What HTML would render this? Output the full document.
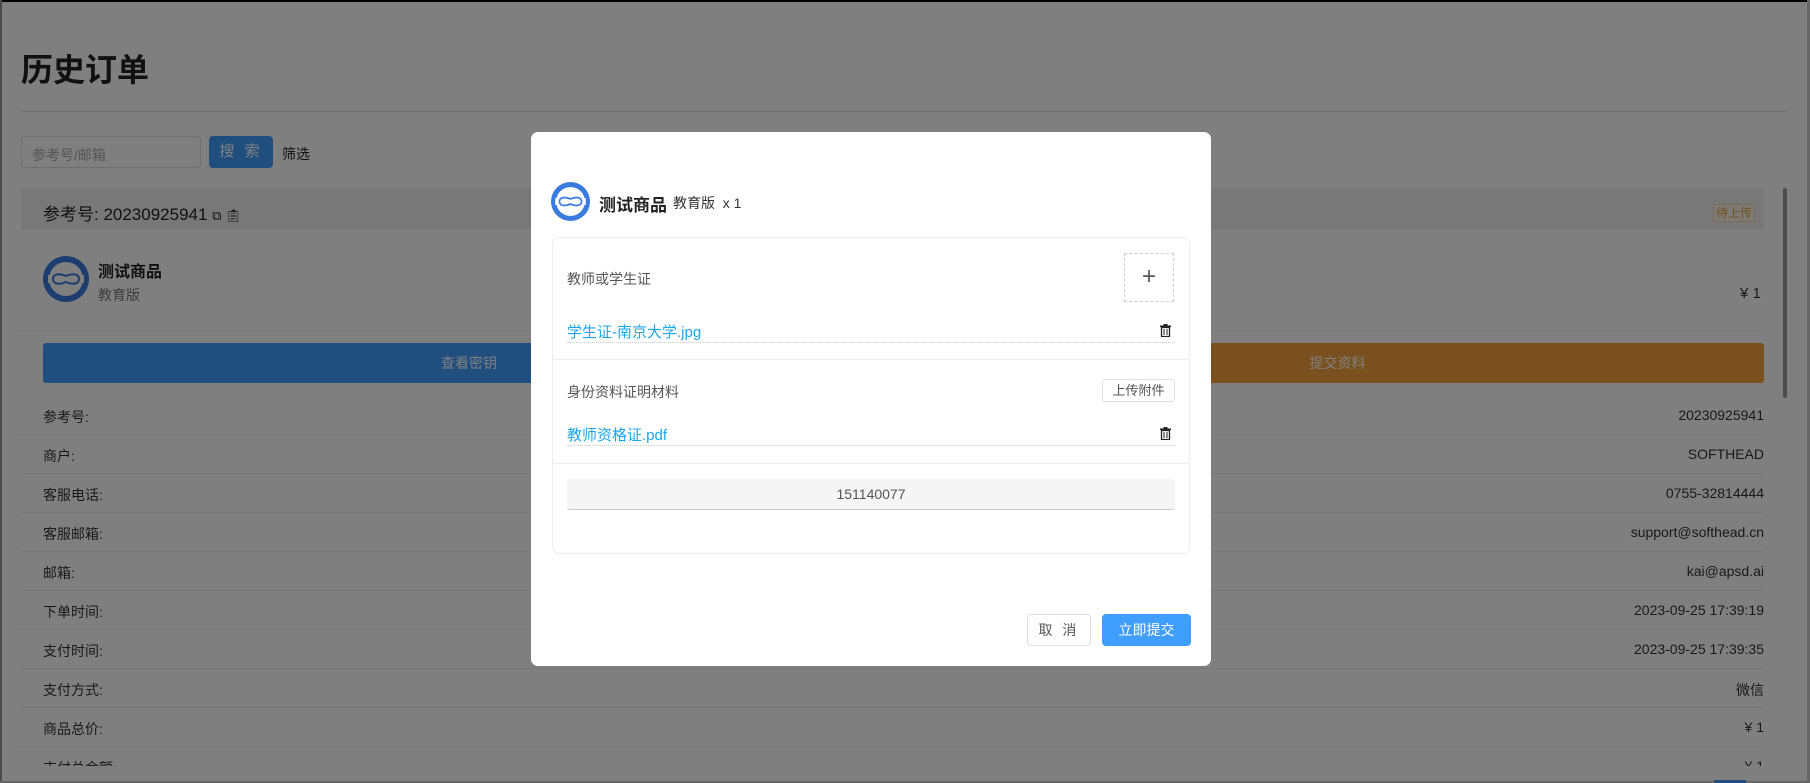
<!DOCTYPE html>
<html><head><meta charset="utf-8"><style>
*{box-sizing:border-box;margin:0;padding:0}
body{width:1810px;height:783px;overflow:hidden;background:#fff;font-family:"Liberation Sans","Noto Sans CJK SC",sans-serif;position:relative;color:#333}
.abs{position:absolute}
.row{position:absolute;left:21px;width:1743px;height:39px;border-bottom:1px solid #ebeef5;font-size:14px;color:#333}
.row span{position:absolute;top:11px}
.row .l{left:22px}.row .r{right:0}
.ov{position:absolute;left:0;top:0;width:1810px;height:783px;background:rgba(0,0,0,.5)}
.modal{position:absolute;left:531px;top:132px;width:680px;height:534px;background:#fff;border-radius:7px}
.tr{position:absolute;right:4px;top:3px}
</style></head><body>
<div class="abs" style="left:0;top:0;width:1810px;height:2px;background:#000"></div>
<div class="abs" style="left:0;top:0;width:2px;height:783px;background:#999"></div>
<div class="abs" style="right:0;top:0;width:3px;height:783px;background:#ccc"></div>
<div class="abs" style="left:0;bottom:0;width:1810px;height:2px;background:#ccc"></div>
<div class="abs" style="left:21px;top:45px;font-size:32px;font-weight:bold;color:#222">历史订单</div>
<div class="abs" style="left:21px;top:111px;width:1766px;height:1px;background:#ddd"></div>
<div class="abs" style="left:21px;top:136px;width:180px;height:32px;border:1px solid #dcdfe6;border-radius:4px;font-size:14px;color:#aaa;padding:8px 10px">参考号/邮箱</div>
<div class="abs" style="left:209px;top:136px;width:64px;height:32px;background:#409eff;border-radius:4px;color:#fff;font-size:15px;text-align:center;line-height:32px;letter-spacing:3px">搜 索</div>
<div class="abs" style="left:282px;top:144px;font-size:14px;color:#222">筛选</div>
<div class="abs" style="left:21px;top:188px;width:1743px;height:42px;background:#f0f0f0"></div>
<div class="abs" style="left:43px;top:200px;font-size:17px;color:#222">参考号: 20230925941 <span style="font-size:13px">⧉ 📋︎</span></div>
<div class="abs" style="left:1713px;top:204px;width:42px;height:18px;border:1px solid #f5dab1;background:#fdf6ec;color:#e6a23c;font-size:12px;text-align:center;line-height:16px">待上传</div>
<div class="abs" style="left:1783px;top:188px;width:4px;height:210px;background:#999;border-radius:2px"></div>
<svg class="abs" style="left:43px;top:256px" width="46" height="46" viewBox="0 0 46 46"><circle cx="23" cy="23" r="23" fill="#3a7be0"/><circle cx="23" cy="23" r="17" fill="#fff"/><path d="M10 23c0-5 6-6 13-3 7-3 13-2 13 3s-6 6-13 3c-7 3-13 2-13-3z" fill="none" stroke="#3a7be0" stroke-width="2"/><rect x="5" y="19" width="3" height="8" fill="#fff"/><rect x="38" y="19" width="3" height="8" fill="#fff"/></svg>
<div class="abs" style="left:98px;top:258px;font-size:16px;font-weight:bold;color:#222">测试商品</div>
<div class="abs" style="left:98px;top:285px;font-size:14px;color:#777">教育版</div>
<div class="abs" style="left:1740px;top:285px;font-size:15px;color:#333">¥ 1</div>
<div class="abs" style="left:21px;top:330px;width:1743px;height:1px;background:#ebeef5"></div>
<div class="abs" style="left:43px;top:343px;width:852px;height:40px;background:#409eff;border-radius:3px;color:#fff;font-size:14px;text-align:center;line-height:40px">查看密钥</div>
<div class="abs" style="left:911px;top:343px;width:853px;height:40px;background:#f5a33c;border-radius:3px;color:#fff;font-size:14px;text-align:center;line-height:40px">提交资料</div>
<div class="row" style="top:396px"><span class="l">参考号:</span><span class="r">20230925941</span></div>
<div class="row" style="top:435px"><span class="l">商户:</span><span class="r">SOFTHEAD</span></div>
<div class="row" style="top:474px"><span class="l">客服电话:</span><span class="r">0755-32814444</span></div>
<div class="row" style="top:513px"><span class="l">客服邮箱:</span><span class="r">support@softhead.cn</span></div>
<div class="row" style="top:552px"><span class="l">邮箱:</span><span class="r">kai@apsd.ai</span></div>
<div class="row" style="top:591px"><span class="l">下单时间:</span><span class="r">2023-09-25 17:39:19</span></div>
<div class="row" style="top:630px"><span class="l">支付时间:</span><span class="r">2023-09-25 17:39:35</span></div>
<div class="row" style="top:669px"><span class="l">支付方式:</span><span class="r">微信</span></div>
<div class="row" style="top:708px"><span class="l">商品总价:</span><span class="r">¥ 1</span></div>
<div class="row" style="top:747px;height:19px;overflow:hidden;border:0"><span class="l">支付总金额:</span><span class="r">¥ 1</span></div>
<div class="abs" style="left:1714px;top:780px;width:32px;height:3px;background:#409eff"></div>
<div class="ov"></div>
<div class="modal">
<svg class="abs" style="left:20px;top:50px" width="39" height="39" viewBox="0 0 46 46"><circle cx="23" cy="23" r="23" fill="#3a7be0"/><circle cx="23" cy="23" r="17" fill="#fff"/><path d="M10 23c0-5 6-6 13-3 7-3 13-2 13 3s-6 6-13 3c-7 3-13 2-13-3z" fill="none" stroke="#3a7be0" stroke-width="2"/><rect x="5" y="19" width="3" height="8" fill="#fff"/><rect x="38" y="19" width="3" height="8" fill="#fff"/></svg>
<div class="abs" style="left:68px;top:59px;font-size:17px;font-weight:bold;color:#222">测试商品</div>
<div class="abs" style="left:142px;top:61px;font-size:14px;color:#333">教育版 &nbsp;x 1</div>
<div class="abs" style="left:21px;top:105px;width:638px;height:317px;border:1px solid #ebeef5;border-radius:7px"></div>
<div class="abs" style="left:36px;top:137px;font-size:14px;color:#555">教师或学生证</div>
<div class="abs" style="left:593px;top:121px;width:50px;height:49px;border:1px dashed #ccc;text-align:center;line-height:46px;font-size:24px;color:#555">+</div>
<div class="abs" style="left:36px;top:189px;width:608px;height:22px;border-bottom:1px dotted #ccc;font-size:15px;color:#1aa7ee">学生证-南京大学.jpg<svg class="tr" width="11" height="13" viewBox="0 0 11 13"><rect x="0" y="1.5" width="11" height="1.5" fill="#222"/><rect x="3.5" y="0" width="4" height="1.5" fill="#222"/><path d="M1.5 3.5h8v9h-8z" fill="none" stroke="#222" stroke-width="1.3"/><path d="M4 5v6M7 5v6" stroke="#222"/></svg></div>
<div class="abs" style="left:22px;top:227px;width:636px;height:1px;background:#ebeef5"></div>
<div class="abs" style="left:36px;top:250px;font-size:14px;color:#555">身份资料证明材料</div>
<div class="abs" style="left:571px;top:247px;width:73px;height:23px;border:1px solid #dcdfe6;border-radius:3px;font-size:13px;color:#555;text-align:center;line-height:21px">上传附件</div>
<div class="abs" style="left:36px;top:292px;width:608px;height:22px;border-bottom:1px dotted #ccc;font-size:15px;color:#1aa7ee">教师资格证.pdf<svg class="tr" width="11" height="13" viewBox="0 0 11 13"><rect x="0" y="1.5" width="11" height="1.5" fill="#222"/><rect x="3.5" y="0" width="4" height="1.5" fill="#222"/><path d="M1.5 3.5h8v9h-8z" fill="none" stroke="#222" stroke-width="1.3"/><path d="M4 5v6M7 5v6" stroke="#222"/></svg></div>
<div class="abs" style="left:22px;top:331px;width:636px;height:1px;background:#ebeef5"></div>
<div class="abs" style="left:36px;top:347px;width:608px;height:31px;background:#f5f5f5;border-bottom:1px solid #ccc;border-radius:3px;text-align:center;line-height:30px;font-size:14px;color:#555">151140077</div>
<div class="abs" style="left:496px;top:482px;width:64px;height:32px;border:1px solid #dcdfe6;border-radius:4px;text-align:center;line-height:30px;font-size:14px;color:#555;letter-spacing:3px">取 消</div>
<div class="abs" style="left:571px;top:482px;width:89px;height:32px;background:#409eff;border-radius:4px;text-align:center;line-height:32px;font-size:14px;color:#fff">立即提交</div>
</div>
</body></html>
